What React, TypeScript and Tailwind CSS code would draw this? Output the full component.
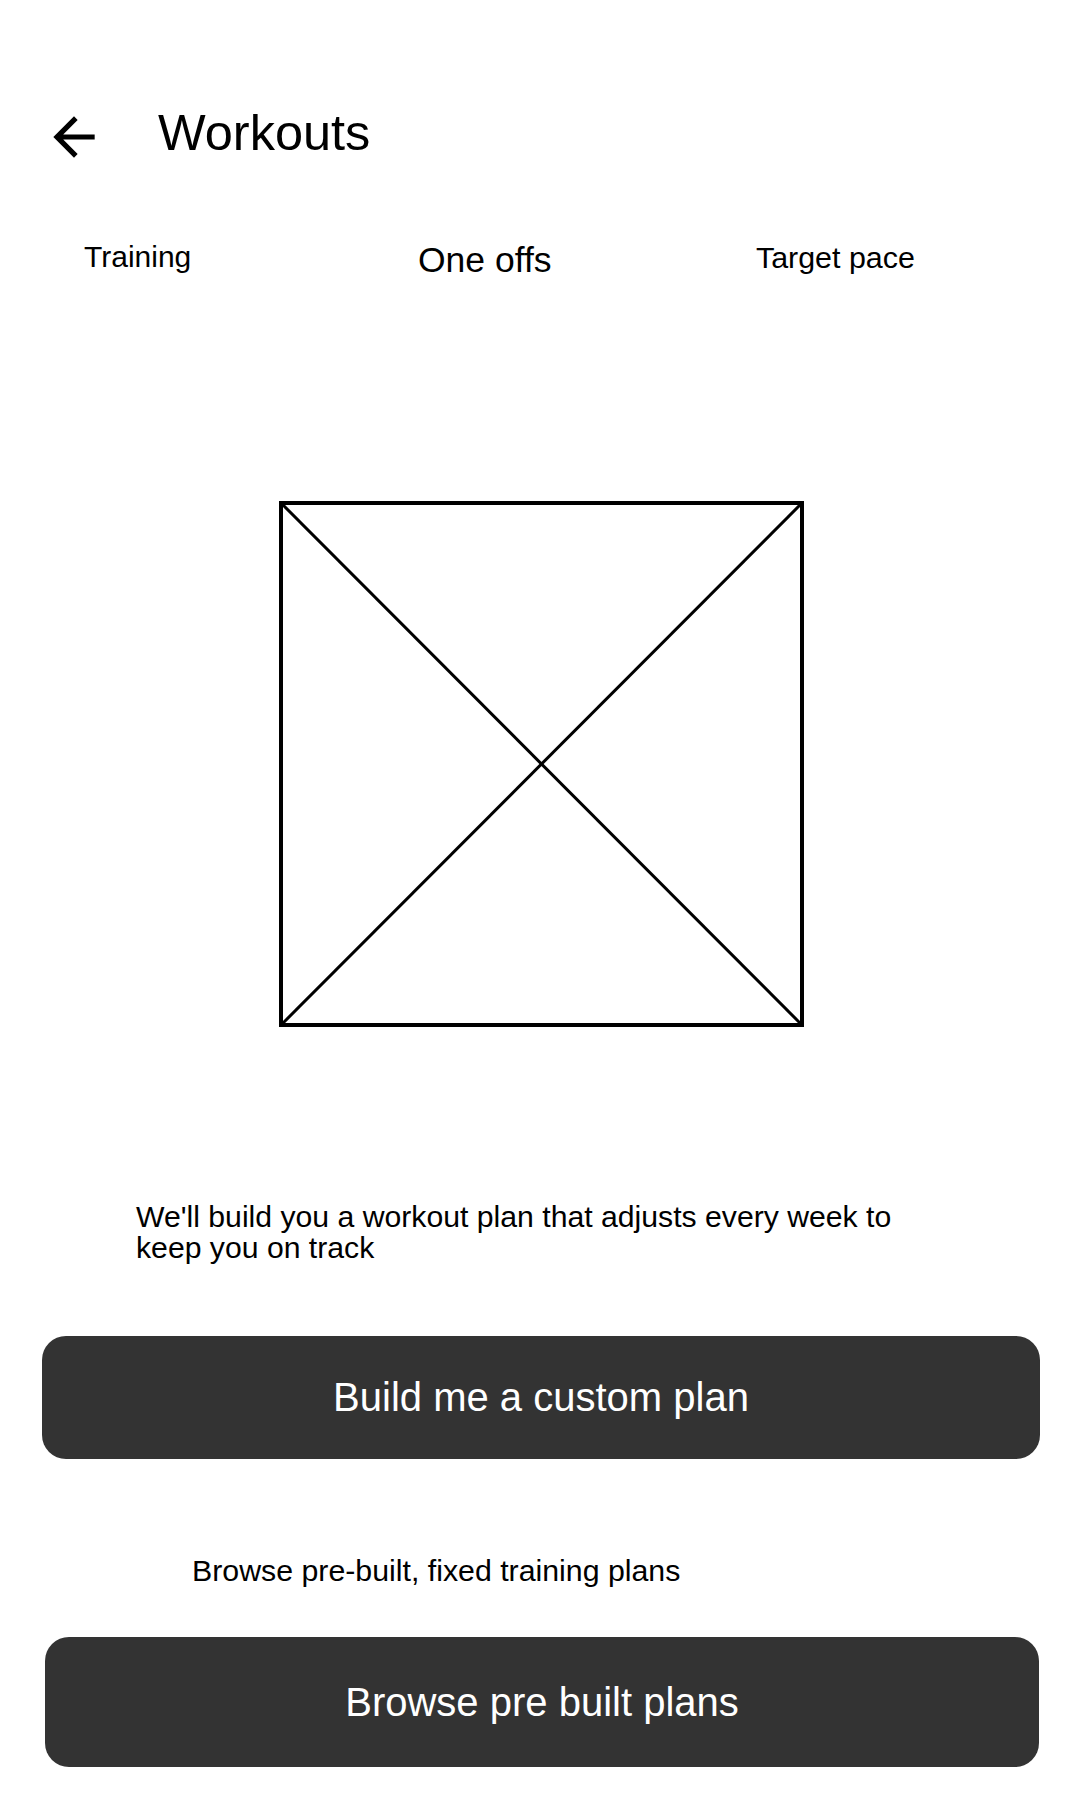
import React from 'react';

const BackArrow: React.FC = () => (
  <svg width="62" height="62" viewBox="0 0 24 24" className="shrink-0" aria-hidden="true">
    <path d="M20 11H7.83l5.59-5.59L12 4l-8 8 8 8 1.41-1.41L7.83 13H20v-2z" fill="#000" />
  </svg>
);

const ImagePlaceholder: React.FC = () => (
  <div className="ml-[279px] mt-[222px] w-[525px] h-[526px] border-[4px] border-black relative">
    <svg className="absolute inset-0 w-full h-full" viewBox="0 0 517 518" preserveAspectRatio="none">
      <line x1="0" y1="0" x2="517" y2="518" stroke="#000" strokeWidth="3" />
      <line x1="517" y1="0" x2="0" y2="518" stroke="#000" strokeWidth="3" />
    </svg>
  </div>
);

const App: React.FC = () => {
  return (
    <div
      className="min-h-[1800px] w-[1080px] bg-white text-black flex flex-col"
      style={{ fontFamily: '"Liberation Sans", Arial, sans-serif' }}
    >
      {/* header */}
      <div className="pt-[106px] pl-[43px] flex items-start">
        <button type="button" className="block">
          <BackArrow />
        </button>
        <h1 className="ml-[53px] mt-[2px] text-[50.5px] leading-none font-normal">Workouts</h1>
      </div>

      {/* tabs */}
      <div className="mt-[74px] pl-[84px] flex items-start">
        <div className="w-[334px] text-[30px] leading-none">Training</div>
        <div className="w-[338px] mt-[1px] text-[35.5px] leading-none">One offs</div>
        <div className="text-[30.4px] leading-none">Target pace</div>
      </div>

      <ImagePlaceholder />

      <p className="mt-[174px] ml-[136px] w-[800px] text-[30.2px] leading-[31px]">
        We'll build you a workout plan that adjusts every week to keep you on track
      </p>

      <button
        type="button"
        className="mt-[73px] ml-[42px] w-[998px] h-[123px] rounded-[24px] bg-[#333333] text-white text-[40px] leading-none flex items-center justify-center"
      >
        Build me a custom plan
      </button>

      <p className="mt-[96px] ml-[192px] text-[30.3px] leading-[31px]">
        Browse pre-built, fixed training plans
      </p>

      <button
        type="button"
        className="mt-[51px] ml-[45px] w-[994px] h-[130px] rounded-[24px] bg-[#333333] text-white text-[40px] leading-none flex items-center justify-center"
      >
        Browse pre built plans
      </button>
    </div>
  );
};

export default App;
